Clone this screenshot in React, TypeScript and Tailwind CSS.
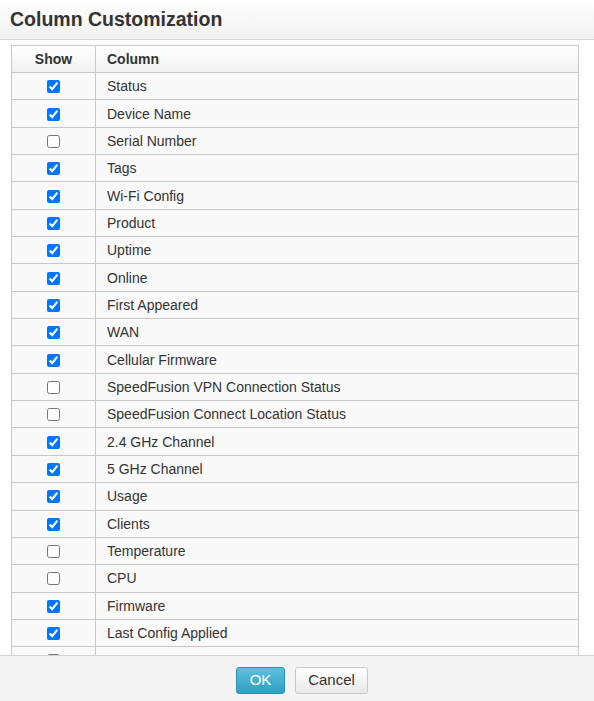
import React from "react";

const columns: [string, boolean][] = [
    ["Status", true],
    ["Device Name", true],
    ["Serial Number", false],
    ["Tags", true],
    ["Wi-Fi Config", true],
    ["Product", true],
    ["Uptime", true],
    ["Online", true],
    ["First Appeared", true],
    ["WAN", true],
    ["Cellular Firmware", true],
    ["SpeedFusion VPN Connection Status", false],
    ["SpeedFusion Connect Location Status", false],
    ["2.4 GHz Channel", true],
    ["5 GHz Channel", true],
    ["Usage", true],
    ["Clients", true],
    ["Temperature", false],
    ["CPU", false],
    ["Firmware", true],
    ["Last Config Applied", true],
    ["", false],
];

const App = () => {
    return (
        <div className="w-[594px] h-[701px] flex flex-col bg-white text-[#333] overflow-hidden" style={{fontFamily: '"Liberation Sans", Arial, sans-serif'}}>
            <div className="h-[40px] shrink-0 flex items-center px-[10px] bg-gradient-to-b from-white to-[#f0f0f0] border-b border-[#d4d4d4]">
                <h1 className="text-[19.5px] font-bold text-[#333]">Column Customization</h1>
            </div>
            <div className="flex-1 overflow-hidden pt-[5px] pl-[11px] pr-[15px]">
                <div className="border border-[#c8c8c8] border-b-0 text-[14px]">
                    <div className="flex h-[27px] bg-gradient-to-b from-white to-[#f1f1f1] border-b border-[#c8c8c8] font-bold">
                        <div className="w-[84px] shrink-0 flex items-center justify-center border-r border-[#c8c8c8]">Show</div>
                        <div className="flex-1 flex items-center pl-[11px]">Column</div>
                    </div>
                    {columns.map(([name, on], i) => (
                        <div key={i} className="flex h-[27.35px] bg-[#f9f9f9] border-b border-[#c8c8c8]">
                            <div className="w-[84px] shrink-0 flex items-center justify-center border-r border-[#c8c8c8]">
                                <input type="checkbox" defaultChecked={on} className="w-[13px] h-[13px] m-0 mt-[1px]" />
                            </div>
                            <div className="flex-1 flex items-center pl-[11px] pt-[1px] whitespace-nowrap">{name}</div>
                        </div>
                    ))}
                </div>
            </div>
            <div className="h-[46px] shrink-0 flex items-start pt-[11px] justify-center gap-[10px] pl-[10px] bg-[#f4f4f4] border-t border-[#d4d4d4]">
                <button className="w-[49px] h-[27px] rounded-[3px] text-white text-[15px] bg-gradient-to-b from-[#5bc0de] to-[#2f9fc0] border border-[#2a93b4]">OK</button>
                <button className="w-[73px] h-[27px] rounded-[3px] text-[#333] text-[15px] bg-gradient-to-b from-white to-[#e8e8e8] border border-[#c8c8c8]">Cancel</button>
            </div>
        </div>
    );
};

export default App;
